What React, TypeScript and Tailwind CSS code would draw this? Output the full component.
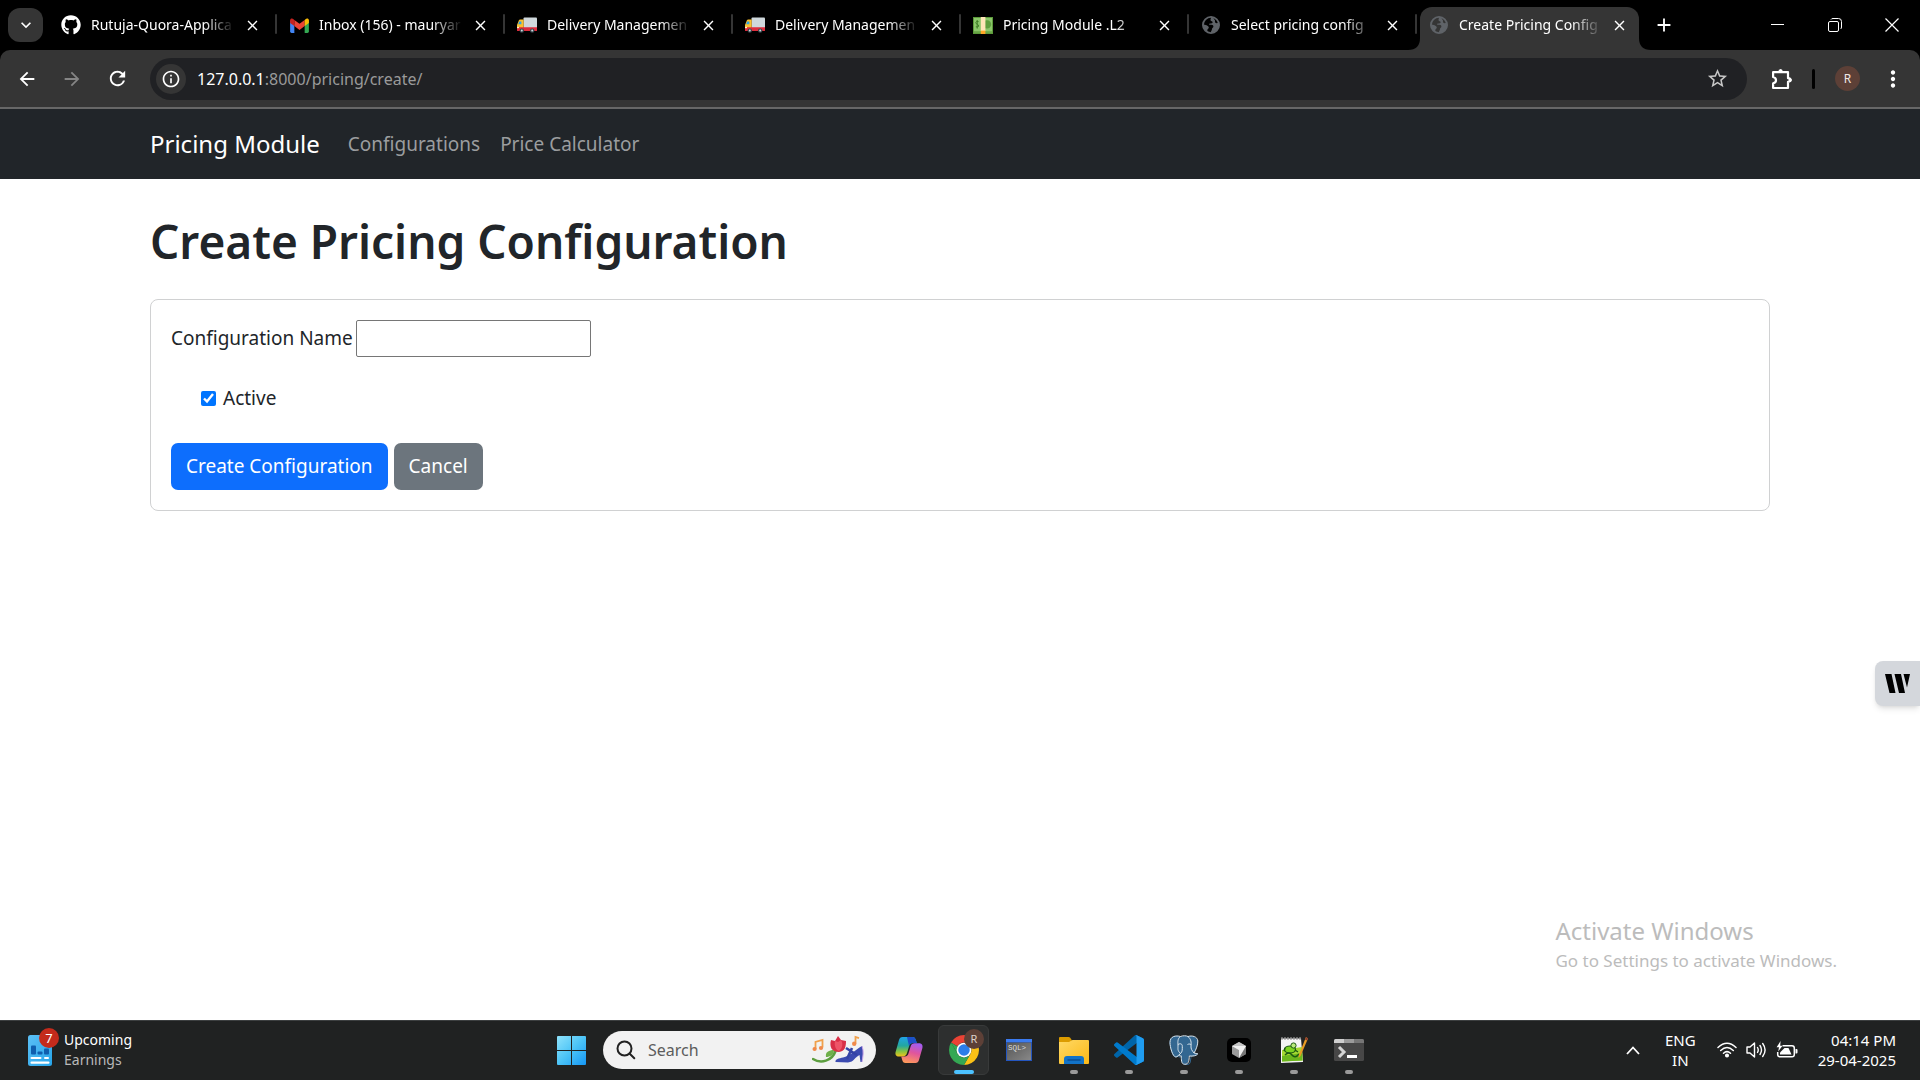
import type { ReactNode } from "react";
import { FaGithub } from "react-icons/fa";
import {
  MdAdd,
  MdArrowBack,
  MdArrowForward,
  MdClose,
  MdInfoOutline,
  MdKeyboardArrowDown,
  MdMoreVert,
  MdRefresh,
  MdStarOutline,
} from "react-icons/md";
import { SiPostgresql } from "react-icons/si";

/* ---------- favicons ---------- */

function GmailIcon() {
  return (
    <svg viewBox="0 0 20 16" className="h-[15px] w-[19px]" aria-hidden="true">
      <path d="M0 2.5V14.5Q0 16 1.5 16H4.5V6Z" fill="#4285f4" />
      <path d="M20 2.5V14.5Q20 16 18.5 16H15.5V6Z" fill="#34a853" />
      <path d="M4.5 2V8.6L10 12.7L15.5 8.6V2L10 6.2Z" fill="#ea4335" />
      <path d="M0 2.4V5.3L4.5 8.6V2L3.6 1.2C2 0 0 .8 0 2.4Z" fill="#c5221f" />
      <path d="M20 2.4V5.3L15.5 8.6V2L16.4 1.2C18 0 20 .8 20 2.4Z" fill="#fbbc04" />
    </svg>
  );
}

function TruckIcon() {
  return (
    <svg viewBox="0 0 20 16" className="h-4 w-5" aria-hidden="true">
      <rect x="6.5" y="0.5" width="13.5" height="11" rx="1" fill="#cfd8dc" />
      <path d="M1.8 3.4Q2.2 2.5 3.2 2.5H6.6V11H0V8Z" fill="#fbc02d" />
      <path d="M2.2 4.4H4.4V7.2H1.2Z" fill="#29a3e8" />
      <path d="M0 10.2H20V13.4Q20 14 19.4 14H.6Q0 14 0 13.4Z" fill="#dd2c3c" />
      <rect x="0" y="9.8" width="2" height="1.4" fill="#fff3c4" />
      <circle cx="4.8" cy="13.6" r="2.2" fill="#37474f" />
      <circle cx="15.2" cy="13.6" r="2.2" fill="#37474f" />
      <circle cx="4.8" cy="13.6" r="1" fill="#cfd8dc" />
      <circle cx="15.2" cy="13.6" r="1" fill="#cfd8dc" />
    </svg>
  );
}

function MoneyIcon() {
  return (
    <svg viewBox="0 0 20 17" className="h-[17px] w-5" aria-hidden="true">
      <rect width="20" height="17" fill="#5c9a3a" />
      <rect x="1" y="1" width="18" height="13" fill="#8bc66a" />
      <rect x="1" y="14.4" width="18" height="1" fill="#7cb85a" />
      <circle cx="14" cy="7.4" r="4.2" fill="#5f9f3e" />
      <path d="M5.600 4.600Q3 3.800 2.800 5.600C2.700 7.400 5.800 7 5.600 9Q5.400 10.600 2.800 9.800M4.200 3V11.600" fill="none" stroke="#3f7d26" strokeWidth="1" />
      <rect x="7.800" width="4.600" height="14" fill="#ffe6b8" />
      <rect x="7.800" y="13.600" width="4.600" height="3.400" fill="#ffa726" />
    </svg>
  );
}

function GlobeIcon() {
  return (
    <svg viewBox="0 0 18 18" className="h-[18px] w-[18px]" aria-hidden="true">
      <circle cx="9" cy="9" r="8.1" fill="none" stroke="#5f6368" strokeWidth="1.8" />
      <path
        d="M8.6 1C9.6 2.4 8 3.2 8.6 4.4C9 5.3 10.6 4.8 10.6 6.2C10.6 7.4 9.4 7.3 8 7.4C6.6 7.6 6.8 8.8 8.2 8.8C10 8.8 11.4 9 11.4 10.6C11.4 11.8 10 11.8 10 13C10 14.6 8.8 15 8.8 17C13.6 17 17 13.4 17 9C17 8 16.8 7 16.4 6.2C15.6 7.4 14 7.6 13.2 6.4C12.6 5.4 13.4 4.6 12.6 3.8C12 3 11.6 2.6 11.6 1.4Z"
        fill="#5f6368"
      />
      <path d="M1 8.6C3 8.6 6.6 9.6 6.8 11.6C6.8 13 5.4 12.6 5.4 14C5.4 15 5 15.6 4.4 15.8C2 14 1 11.6 1 8.6Z" fill="#5f6368" />
    </svg>
  );
}

/* ---------- toolbar icons ---------- */

function PuzzleIcon() {
  return (
    <svg viewBox="0 0 22 22" className="h-[22px] w-[22px]" fill="none" stroke="#fff" strokeWidth="2.2" strokeLinejoin="round" aria-hidden="true">
      <path d="M2.1 4.2H17V10.2Q19.4 10.4 19.4 12Q19.4 13.6 17 13.8V20H2.1V15.4Q5 14.6 5 12.2Q5 9.8 2.1 9Z" />
      <path d="M7.4 3.6Q7.6 1 9.6 1Q11.6 1 11.8 3.6Z" fill="#fff" stroke="none" />
      <path d="M17.6 9.8Q20.8 10 20.8 12Q20.8 14 17.6 14.2Z" fill="#fff" stroke="none" />
    </svg>
  );
}

function TabFlare({ side }: { side: "left" | "right" }) {
  return (
    <svg
      viewBox="0 0 12 12"
      className={side === "left" ? "absolute right-full bottom-0 h-3 w-3" : "absolute bottom-0 left-full h-3 w-3"}
      aria-hidden="true"
    >
      <path d={side === "left" ? "M12 0V12H0Q12 12 12 0Z" : "M0 0V12H12Q0 12 0 0Z"} fill="#353535" />
    </svg>
  );
}

/* ---------- taskbar icons ---------- */

function WidgetsIcon() {
  return (
    <svg viewBox="0 0 24 31" className="h-[31px] w-6" aria-hidden="true">
      <defs>
        <linearGradient id="widget" x1="0" y1="0" x2="1" y2="1">
          <stop offset="0" stopColor="#5cc0f5" />
          <stop offset="1" stopColor="#26a5ea" />
        </linearGradient>
      </defs>
      <rect width="24" height="31" rx="2.5" fill="url(#widget)" />
      <rect x="3" y="10.500" width="5" height="9" rx="1" fill="#0f5fae" />
      <rect x="9.500" y="16.500" width="5" height="3" rx="1" fill="#0f5fae" />
      <rect x="16" y="13.500" width="5" height="6" rx="1" fill="#0f5fae" />
      <rect x="2.500" y="22" width="11" height="2" rx="1" fill="#fff" />
      <rect x="16" y="22" width="5" height="2" rx="1" fill="#fff" />
      <rect x="2.500" y="26.500" width="19" height="2.200" rx="1" fill="#fff" />
    </svg>
  );
}

function StartIcon() {
  return (
    <svg viewBox="0 0 29 29" className="h-[29px] w-[29px]" aria-hidden="true">
      <defs>
        <linearGradient id="start" x1="0" y1="0" x2="29" y2="29" gradientUnits="userSpaceOnUse">
          <stop offset="0" stopColor="#8fe3fb" />
          <stop offset="0.5" stopColor="#4cc4f7" />
          <stop offset="1" stopColor="#1597f5" />
        </linearGradient>
      </defs>
      <path d="M1 0H14V14H0V1Q0 0 1 0ZM15 0H28Q29 0 29 1V14H15ZM0 15H14V29H1Q0 29 0 28ZM15 15H29V28Q29 29 28 29H15Z" fill="url(#start)" />
    </svg>
  );
}

function SearchIcon() {
  return (
    <svg viewBox="0 0 20 20" className="h-5 w-5" fill="none" stroke="#222" strokeWidth="2" strokeLinecap="round" aria-hidden="true">
      <circle cx="8.500" cy="8.500" r="7" />
      <path d="M13.500 13.500L18.300 18.300" />
    </svg>
  );
}

function SearchArt() {
  return (
    <svg viewBox="0 0 54 30" className="h-[30px] w-[54px]" aria-hidden="true">
      <path d="M3.500 14V7L10.500 5V12.500" fill="none" stroke="#f0a04b" strokeWidth="1.800" />
      <circle cx="2.600" cy="14" r="2.100" fill="#f08a4b" />
      <circle cx="9" cy="13" r="2.100" fill="#f08a4b" />
      <path d="M43.500 8.500V2L47 3.200" fill="none" stroke="#f0a04b" strokeWidth="1.800" />
      <circle cx="42.200" cy="8.800" r="2.200" fill="#f08a4b" />
      <path d="M1 24C9 29 20 26 23.500 16" fill="none" stroke="#5c9e3f" strokeWidth="2.600" strokeLinecap="round" />
      <path d="M14 22C13 17 17 15 22 15C22 20 18 22 14 22Z" fill="#6fb04a" />
      <path d="M19 5L23 6L26 1L29 5L34 6C34 12 33 16 27 17C20 17 17 12 19 5Z" fill="#d92f47" />
      <path d="M23 6C22 11 24 15 27 16C31 13 31 8 29 5L26 7Z" fill="#ee5468" />
      <path d="M50 11C52 16 51 22 50 27H48.500L47.500 20C43 22 42 27 36 27.500L23.500 27C23 24 27 23.500 31 22.500C38 21 43 15 50 11Z" fill="#3c4bb0" />
      <path d="M50 11C52 16 51 22 50 27" fill="none" stroke="#c9a6e8" strokeWidth="1" />
      <path d="M34 13L45 20M35 24L40 13" stroke="#3443a5" strokeWidth="2.600" />
    </svg>
  );
}

function CopilotIcon() {
  return (
    <svg viewBox="0 0 28 26" className="h-[26px] w-7" aria-hidden="true">
      <defs>
        <linearGradient id="cpA" x1="0" y1="0" x2="0" y2="1">
          <stop offset="0" stopColor="#20a4e8" />
          <stop offset="0.45" stopColor="#22a7a0" />
          <stop offset="0.75" stopColor="#8ac43f" />
          <stop offset="1" stopColor="#f2c21a" />
        </linearGradient>
        <linearGradient id="cpB" x1="0.6" y1="0" x2="0.3" y2="1">
          <stop offset="0" stopColor="#a45cf0" />
          <stop offset="0.45" stopColor="#e0559c" />
          <stop offset="1" stopColor="#ff9a5a" />
        </linearGradient>
      </defs>
      <path d="M7.500 0H17.500C19.500 0 20.200 1.200 20.800 3L21.800 6H18C15.600 6 14.500 7.500 14 9.500L12 16C11.400 18 10 19.500 8 19.500H4C1 19.500 0 17.500 .6 15L4 3C4.600 1 5.600 0 7.500 0Z" fill="url(#cpA)" />
      <path d="M12 0H17.500C19.500 0 20.200 1.200 20.800 3L21.800 6H18C15.600 6 14.500 7.500 14 9Z" fill="#1c50c8" />
      <path d="M20.500 26H10.500C8.500 26 7.800 24.800 7.200 23L6.200 19.500H9.500C12 19.500 13 18 13.600 16L15.600 9.500C16.200 7.500 17.600 6.300 19.600 6.300H24C27 6.300 28 8.500 27.400 11L24 23C23.400 25 22.400 26 20.500 26Z" fill="url(#cpB)" />
    </svg>
  );
}

function ChromeIcon() {
  return (
    <svg viewBox="0 0 48 48" className="h-[30px] w-[30px]" aria-hidden="true">
      <path d="M3.220 12A24 24 0 0 1 44.780 12H24A12 12 0 0 0 13.610 18Z" fill="#ea4335" />
      <path d="M44.780 12A24 24 0 0 1 24 48L34.390 30A12 12 0 0 0 24 12Z" fill="#fbc116" />
      <path d="M24 48A24 24 0 0 1 3.220 12L13.610 30A12 12 0 0 0 34.390 30Z" fill="#34a853" />
      <path d="M3.220 12L13.610 30L16 20Z" fill="#34a853" />
      <circle cx="24" cy="24" r="11.800" fill="#fff" />
      <circle cx="24" cy="24" r="9.200" fill="#2b7de9" />
    </svg>
  );
}

function SqlIcon() {
  return (
    <svg viewBox="0 0 26 22" className="h-[22px] w-[26px]" aria-hidden="true">
      <defs>
        <linearGradient id="sql" x1="0" y1="0" x2="1" y2="1">
          <stop offset="0" stopColor="#555" />
          <stop offset="1" stopColor="#888" />
        </linearGradient>
      </defs>
      <rect width="26" height="22" fill="#2456c0" />
      <rect width="26" height="3" fill="#3b7bf0" />
      <rect x="1" y="3.500" width="24" height="17.500" fill="url(#sql)" />
      <text x="2" y="10.500" fill="#ddd" fontFamily="Liberation Mono, monospace" fontSize="7.500">
        SQL&gt;
      </text>
    </svg>
  );
}

function FolderIcon() {
  return (
    <svg viewBox="0 0 30 27" className="h-[27px] w-[30px]" aria-hidden="true">
      <defs>
        <linearGradient id="folder" x1="0" y1="0" x2="1" y2="1">
          <stop offset="0" stopColor="#ffd965" />
          <stop offset="1" stopColor="#fbb917" />
        </linearGradient>
      </defs>
      <path d="M0 1Q0 0 1 0H9.500Q10.500 0 11.200 .8L13 3.500V8H0Z" fill="#dc9c00" />
      <path d="M0 5H10L13.500 3H29Q30 3 30 4V26Q30 27 29 27H1Q0 27 0 26Z" fill="url(#folder)" />
      <path d="M5 27V22Q5 19 8 19H22Q25 19 25 22V27Z" fill="#1273c8" />
      <path d="M9 23H21" stroke="#0a4f94" strokeWidth="1.500" strokeLinecap="round" />
    </svg>
  );
}

function VsCodeIcon() {
  return (
    <svg viewBox="0 0 100 100" className="h-[30px] w-[30px]" aria-hidden="true">
      <path d="M96.500 10.700L75.900.8A6.200 6.200 0 0 0 68.800 2L1.400 63.500A4.200 4.200 0 0 0 1.400 69.600L6.900 74.600A4.200 4.200 0 0 0 12.200 74.900L93.500 13.300A4.100 4.100 0 0 1 100 16.600V16.300A6.200 6.200 0 0 0 96.500 10.700Z" fill="#0065a9" />
      <path d="M96.500 89.300L75.900 99.200A6.200 6.200 0 0 1 68.800 98L1.400 36.500A4.200 4.200 0 0 1 1.400 30.400L6.900 25.400A4.200 4.200 0 0 1 12.200 25.100L93.500 86.700A4.100 4.100 0 0 0 100 83.400V83.700A6.200 6.200 0 0 1 96.500 89.300Z" fill="#007acc" />
      <path d="M75.900 99.200A6.200 6.200 0 0 1 68.800 98C71.100 100.300 75 98.700 75 95.400V4.600C75 1.300 71.100-.3 68.800 2A6.200 6.200 0 0 1 75.900.8L96.500 10.700A6.200 6.200 0 0 1 100 16.300V83.700A6.200 6.200 0 0 1 96.500 89.300Z" fill="#1f9cf0" />
    </svg>
  );
}

function PostgresIcon() {
  return (
    <span className="relative flex h-[30px] w-[30px] items-center justify-center">
      <svg viewBox="0 0 24 24" className="absolute inset-0 h-[30px] w-[30px]" aria-hidden="true">
        <path
          d="M6 .8C2.500.8.8 3.200 1 7C1.300 12 3.500 17.500 5.500 17.800C7 17.800 8 16.500 9 15.500L9.800 17C9.800 19 9.500 23.200 12.500 23.200C15.300 23.200 15.800 21 15.800 16.800C19 16.900 21.500 16.500 22.800 15C22 14.600 21 14.800 20.200 14.600C21.800 11.500 23.800 5.500 22 3C20 .6 17 .6 15 1.300C13 .8 11 .9 9.500 1.500C8.500 1.100 7 .8 6 .8Z"
          fill="#336791"
        />
      </svg>
      <SiPostgresql className="relative h-[29px] w-[29px] text-[#336791]" aria-hidden="true" />
      <svg viewBox="0 0 30 30" className="absolute inset-0 h-[30px] w-[30px]" fill="none" stroke="#dbe6ee" strokeWidth="1" strokeLinejoin="round" aria-hidden="true">
        <path d="M11.500 1.500C7 .2 1 1 1 7.500C1 12 3.500 21.500 6.800 22C8.500 22.200 9.500 19.800 11.500 18.500M11.500 1.500C14 .5 17 .5 19 1.500C23 .2 28.500 1.500 28.800 6C29 9.500 27 15 25 18C26.500 18.700 28 18.200 28.800 18.800C27.500 20.800 24 21.300 20.300 21C20 25 20 29.300 15.800 29.300C11.800 29.300 12.500 24 12.200 20.800C9.800 21.300 9.300 20 11.500 18.500" />
        <path d="M11.500 1.500C8.500 3.500 8.800 7 9 10C9.200 13.500 8 15.500 11.500 18.500M19 1.500C22 4 22.500 7.500 22 11C21.800 14 23 15.500 25 18M9 9.500C11.500 8 13.500 9 13.300 11.500C13.200 14 13.800 16.500 11.500 18.500M22.200 9.500C20.500 8.700 19.500 9 18.500 9.500" />
      </svg>
    </span>
  );
}

function CursorIcon() {
  return (
    <svg viewBox="0 0 24 24" className="h-6 w-6" aria-hidden="true">
      <rect width="24" height="24" rx="5" fill="#000" />
      <path d="M12 4L19 8V16L12 20L5 16V8Z" fill="#9a9a9a" />
      <path d="M12 4L19 8L12 12L5 8Z" fill="#c4c4c4" />
      <path d="M19 8V16L12 20V12Z" fill="#777" />
      <path d="M5 8H19L12 20V12Z" fill="#efefef" />
    </svg>
  );
}

function NotepadIcon() {
  return (
    <svg viewBox="0 0 28 28" className="h-7 w-7" aria-hidden="true">
      <path d="M1 2.500H21L23 26L1 27Z" fill="#f4f4f4" />
      <path d="M2 14L22 11L22.500 24.500L2 25.500Z" fill="#a6d932" />
      <path d="M2 20L22.200 17L22.500 24.500L2 25.500Z" fill="#6bb71d" />
      <path d="M2 1V4M5 1V4M8 1V4M11 1V4M14 1V4M17 1V4M20 1V4" stroke="#999" strokeWidth="1.200" />
      <ellipse cx="10" cy="13.500" rx="5.500" ry="3.500" fill="#7ed321" stroke="#1c5a12" strokeWidth="1.200" />
      <circle cx="13.500" cy="9.500" r="2.600" fill="#b9ea7a" stroke="#1c5a12" strokeWidth="1" />
      <path d="M5 19Q9 15 12 19T19 18M5 12L4 15M15 14L18 16" fill="none" stroke="#1c5a12" strokeWidth="1.400" />
      <path d="M26 1L28 2.500L20.500 20L18.500 22L18.800 19Z" fill="#e89b24" />
      <path d="M26 1L28 2.500L27 4.500L25 3.500Z" fill="#8c3b2e" />
    </svg>
  );
}

function TerminalIcon() {
  return (
    <svg viewBox="0 0 30 22" className="h-[22px] w-[30px]" aria-hidden="true">
      <rect width="30" height="22" rx="1.500" fill="#474747" />
      <path d="M0 4V1.500Q0 0 1.500 0H10V4Z" fill="#cfcfcf" />
      <rect x="10" width="10" height="4" fill="#9b9b9b" />
      <path d="M20 0H28.500Q30 0 30 1.500V4H20Z" fill="#767676" />
      <path d="M5 8L10 13L5 18" fill="none" stroke="#d4d4d4" strokeWidth="3" />
      <rect x="13" y="16" width="10" height="3" fill="#fff" />
    </svg>
  );
}

function WifiIcon() {
  return (
    <svg viewBox="0 0 20 16" className="h-4 w-5" fill="none" stroke="#fff" strokeWidth="1.500" strokeLinecap="round" aria-hidden="true">
      <path d="M1 5.500Q10-3 19 5.500M3.700 8.500Q10 2.600 16.300 8.500M6.500 11.300Q10 8 13.500 11.300" />
      <circle cx="10" cy="13.500" r="1.300" fill="#fff" />
    </svg>
  );
}

function VolumeIcon() {
  return (
    <svg viewBox="0 0 21 18" className="h-[18px] w-[21px]" fill="none" stroke="#fff" strokeWidth="1.400" strokeLinecap="round" strokeLinejoin="round" aria-hidden="true">
      <path d="M1 6H4L8.500 2V16L4 12H1Z" />
      <path d="M11.500 6.500Q13 9 11.500 11.500M14 4.500Q17 9 14 13.500M16.700 2.500Q21.500 9 16.700 15.500" />
    </svg>
  );
}

function BatteryIcon() {
  return (
    <svg viewBox="0 0 22 18" className="h-[18px] w-[22px]" aria-hidden="true">
      <path d="M6.500 4.700H16Q18.300 4.700 18.300 7V13.500Q18.300 15.800 16 15.800H4Q1.700 15.800 1.700 13.500V11" fill="none" stroke="#fff" strokeWidth="1.500" />
      <path d="M19.500 8H20.500Q21.500 8 21.500 9V11.500Q21.500 12.500 20.500 12.500H19.500Z" fill="#fff" />
      <path d="M8.500 7H12.500L15.500 13.500H4V11.500Z" fill="#fff" />
      <path d="M4.600 0L.6 6.200H3L2.200 10.600L6.500 4.700H4.200Z" fill="#fff" />
    </svg>
  );
}

/* ---------- browser ---------- */

const tabs: { title: string; icon: ReactNode; active?: boolean }[] = [
  { title: "Rutuja-Quora-Applica", icon: <FaGithub className="h-5 w-5" /> },
  { title: "Inbox (156) - mauryar", icon: <GmailIcon /> },
  { title: "Delivery Managemen", icon: <TruckIcon /> },
  { title: "Delivery Managemen", icon: <TruckIcon /> },
  { title: "Pricing Module .L2", icon: <MoneyIcon /> },
  { title: "Select pricing config", icon: <GlobeIcon /> },
  { title: "Create Pricing Config", icon: <GlobeIcon />, active: true },
];

function Tab({ title, icon, active }: { title: string; icon: ReactNode; active?: boolean }) {
  return (
    <div
      className={
        active
          ? "relative mt-[7px] ml-[3px] flex h-[43px] max-w-[219px] min-w-0 flex-1 items-center rounded-t-xl bg-[#353535] pb-[7px] pl-[9px]"
          : "relative flex h-[50px] max-w-[228px] min-w-0 flex-1 items-center pl-[12px]"
      }
    >
      {active && <TabFlare side="left" />}
      <button type="button" className="flex min-w-0 flex-1 items-center text-left">
        <span className="flex w-[20px] shrink-0 items-center justify-center">{icon}</span>
        <span className="ml-[10px] max-w-[148px] flex-1 overflow-hidden [mask-image:linear-gradient(to_right,#000_76%,transparent_97%)] text-[14px] leading-5 whitespace-nowrap">
          {title}
        </span>
      </button>
      <button type="button" aria-label={`Close ${title}`} className={active ? "mr-[11px] shrink-0" : "mr-[16px] shrink-0"}>
        <MdClose className="h-[17px] w-[17px]" />
      </button>
      {!active && <span className="absolute top-[14px] right-0 h-5 w-[2px] rounded bg-[#353535]" />}
      {active && <TabFlare side="right" />}
    </div>
  );
}

function BrowserChrome() {
  return (
    <header className="bg-black text-white">
      <div className="flex h-[50px] items-start">
        <button
          type="button"
          aria-label="Search tabs"
          className="mt-2 mr-[6px] ml-2 flex h-[34px] w-[35px] shrink-0 items-center justify-center rounded-xl bg-[#353535]"
        >
          <MdKeyboardArrowDown className="h-5 w-5" />
        </button>
        <div className="flex min-w-0 flex-1">
          {tabs.map((tab, i) => (
            <Tab key={i} {...tab} />
          ))}
          <button type="button" aria-label="New tab" className="ml-[14px] flex h-[50px] shrink-0 items-center">
            <MdAdd className="h-[22px] w-[22px]" />
          </button>
        </div>
        <div className="flex h-[50px] shrink-0 items-center">
          <button type="button" aria-label="Minimize" className="flex w-[57px] justify-center">
            <svg viewBox="0 0 14 14" className="h-[14px] w-[14px]" stroke="#fff" aria-hidden="true">
              <path d="M0 6.500H13" />
            </svg>
          </button>
          <button type="button" aria-label="Restore" className="flex w-[57px] justify-center">
            <svg viewBox="0 0 14 14" className="h-[14px] w-[14px]" fill="none" stroke="#fff" aria-hidden="true">
              <rect x="0.500" y="3.500" width="10" height="10" rx="1.500" />
              <path d="M3 1.500Q3.500.5 5 .5H10.500Q13.500.5 13.500 3.500V9Q13.500 10.500 12.500 11" />
            </svg>
          </button>
          <button type="button" aria-label="Close window" className="flex w-[57px] justify-center">
            <svg viewBox="0 0 14 14" className="h-[14px] w-[14px]" stroke="#fff" strokeWidth="1.200" aria-hidden="true">
              <path d="M.5.5L13.500 13.500M13.500.5L.5 13.500" />
            </svg>
          </button>
        </div>
      </div>
      <div className="flex h-[59px] items-center rounded-t-[10px] border-b-2 border-[#676767] bg-[#353535]">
        <div className="flex w-[150px] shrink-0 items-center gap-[23px] pl-4">
          <button type="button" aria-label="Back">
            <MdArrowBack className="h-[22px] w-[22px]" />
          </button>
          <button type="button" aria-label="Forward" className="text-[#858585]">
            <MdArrowForward className="h-[22px] w-[22px]" />
          </button>
          <button type="button" aria-label="Reload">
            <MdRefresh className="h-[23px] w-[23px]" />
          </button>
        </div>
        <div className="flex h-[42px] min-w-0 flex-1 items-center rounded-full bg-[#202124] pr-[18px] pl-[6px]">
          <button type="button" aria-label="Site information" className="flex h-[30px] w-[30px] items-center justify-center rounded-full bg-[#353535]">
            <MdInfoOutline className="h-5 w-5" />
          </button>
          <a href="#" className="ml-[11px] flex-1 text-[16px] leading-6 text-[#9a9a9a]">
            <span className="text-white">127.0.0.1</span>:8000/pricing/create/
          </a>
          <button type="button" aria-label="Bookmark this page" className="text-[#c7c7c7]">
            <MdStarOutline className="h-[23px] w-[23px]" />
          </button>
        </div>
        <div className="flex w-[173px] shrink-0 items-center pl-6">
          <button type="button" aria-label="Extensions">
            <PuzzleIcon />
          </button>
          <span className="ml-[19px] h-5 w-[3px] rounded bg-black" />
          <button
            type="button"
            aria-label="Profile"
            className="ml-5 flex h-[25px] w-[25px] items-center justify-center rounded-full bg-[#5d4037] text-[12px] text-[#f0e6e2]"
          >
            R
          </button>
          <button type="button" aria-label="Menu" className="ml-5">
            <MdMoreVert className="h-[26px] w-[26px]" />
          </button>
        </div>
      </div>
    </header>
  );
}

/* ---------- page ---------- */

function Page() {
  return (
    <div className="relative flex-1 bg-white text-[#212529]">
      <nav className="bg-[#212529] px-6">
        <div className="mx-auto flex h-[70px] max-w-[1620px] items-center text-[19px] text-[#9b9d9f]">
          <a href="#" className="mr-7 text-[24px] text-white">
            Pricing Module
          </a>
          <a href="#" className="mr-5">
            Configurations
          </a>
          <a href="#">Price Calculator</a>
        </div>
      </nav>
      <main className="px-6 pt-8">
        <div className="mx-auto max-w-[1620px]">
          <h1 className="mb-7 text-[46px] leading-[60px] font-semibold">Create Pricing Configuration</h1>
          <form className="rounded-lg border border-[#d0d1d2] p-5 text-[19px]" onSubmit={(e) => e.preventDefault()}>
            <div className="flex items-center gap-[3px]">
              <label htmlFor="config-name">Configuration Name</label>
              <input id="config-name" type="text" className="h-[37px] w-[235px] rounded-[2px] border border-[#767676] bg-white px-1" />
            </div>
            <div className="mt-6 ml-[30px] flex h-[34px] items-center gap-[7px]">
              <input id="active" type="checkbox" defaultChecked className="h-[15px] w-[15px] accent-[#0075ff]" />
              <label htmlFor="active">Active</label>
            </div>
            <div className="mt-7 flex gap-[6px] text-white">
              <button type="submit" className="h-[47px] rounded-[7px] bg-[#0d6efd] px-[15px]">
                Create Configuration
              </button>
              <a href="#" className="flex h-[47px] items-center rounded-[7px] bg-[#6c757d] px-[15px]">
                Cancel
              </a>
            </div>
          </form>
        </div>
      </main>
      <button
        type="button"
        aria-label="Open side panel"
        className="absolute top-[552px] right-0 flex h-[45px] w-[45px] items-center rounded-l-lg bg-[#d4d7dc] pl-[10px] shadow-md"
      >
        <svg viewBox="0 0 25 19" className="h-[19px] w-[25px]" aria-hidden="true">
          <path d="M0 0H6.500L10.500 19H4.500ZM9.500 0H16L20 19H14ZM18.500 0H25L22 13.500Z" fill="#000" />
        </svg>
      </button>
      <div className="absolute right-[83px] bottom-[46px] text-[#bcbcbc]">
        <p className="text-[24px] leading-[34px]">Activate Windows</p>
        <p className="text-[17px] leading-[26px]">Go to Settings to activate Windows.</p>
      </div>
    </div>
  );
}

/* ---------- taskbar ---------- */

const apps: { name: string; icon: ReactNode; state: "idle" | "open" | "focused" }[] = [
  { name: "Copilot", icon: <CopilotIcon />, state: "idle" },
  { name: "Google Chrome", icon: <ChromeIcon />, state: "focused" },
  { name: "SQL Command Line", icon: <SqlIcon />, state: "idle" },
  { name: "File Explorer", icon: <FolderIcon />, state: "open" },
  { name: "Visual Studio Code", icon: <VsCodeIcon />, state: "open" },
  { name: "PostgreSQL", icon: <PostgresIcon />, state: "open" },
  { name: "Cursor", icon: <CursorIcon />, state: "open" },
  { name: "Notepad++", icon: <NotepadIcon />, state: "open" },
  { name: "Terminal", icon: <TerminalIcon />, state: "open" },
];

function Taskbar() {
  return (
    <footer className="grid h-[60px] grid-cols-[1fr_auto_1fr] items-center bg-[#202222] text-white inset-shadow-[0_1px_0_#3c3f40]">
      <button type="button" className="flex items-center justify-self-start pl-[28px] text-left leading-5">
        <span className="relative">
          <WidgetsIcon />
          <span className="absolute -top-[7px] left-[11px] flex h-5 w-5 items-center justify-center rounded-full bg-[#c42b1c] text-[13px]">
            7
          </span>
        </span>
        <span className="ml-3 block text-[14px]">
          Upcoming
          <span className="block text-[#b9b9b9]">Earnings</span>
        </span>
      </button>
      <div className="flex items-center">
        <button type="button" aria-label="Start" className="flex w-[55px] justify-center">
          <StartIcon />
        </button>
        <div className="mr-[5px] ml-1 flex h-[38px] w-[273px] items-center rounded-full bg-[#f2f2f2] pr-[10px] pl-[13px]">
          <SearchIcon />
          <input
            type="text"
            aria-label="Search"
            placeholder="Search"
            className="ml-3 min-w-0 flex-1 bg-transparent text-[16px] text-[#222] outline-none placeholder:text-[#5c5c5c]"
          />
          <SearchArt />
        </div>
        {apps.map((app) => (
          <button key={app.name} type="button" aria-label={app.name} className="relative flex h-[50px] w-[55px] items-center justify-center">
            {app.state === "focused" && <span className="absolute inset-x-[2px] inset-y-0 rounded-md border border-[#383a3a] bg-[#2d2f2f]" />}
            <span className="relative">{app.icon}</span>
            {app.state === "focused" && (
              <>
                <span className="absolute top-1 left-[28px] flex h-5 w-5 items-center justify-center rounded-full bg-[#5d4037] text-[11px] text-[#dcd0cb]">
                  R
                </span>
                <span className="absolute bottom-[1px] h-1 w-5 rounded-full bg-[#4cc2ff]" />
              </>
            )}
            {app.state === "open" && <span className="absolute bottom-[1px] h-1 w-2 rounded-full bg-[#9a9a9a]" />}
          </button>
        ))}
      </div>
      <div className="flex items-center justify-self-end pr-6 text-[15px] leading-5">
        <button type="button" aria-label="Show hidden icons" className="mr-[25px]">
          <svg viewBox="0 0 14 9" className="h-[9px] w-[14px]" fill="none" stroke="#fff" strokeWidth="1.800" aria-hidden="true">
            <path d="M1 8L7 1.500L13 8" />
          </svg>
        </button>
        <button type="button" className="mr-[21px] text-center">
          ENG
          <br />
          IN
        </button>
        <button type="button" aria-label="Network, volume and battery" className="mr-5 flex items-center gap-[9px]">
          <WifiIcon />
          <VolumeIcon />
          <BatteryIcon />
        </button>
        <button type="button" className="text-right">
          04:14 PM
          <br />
          29-04-2025
        </button>
      </div>
    </footer>
  );
}

export default function App() {
  return (
    <div className="flex min-h-screen flex-col font-['Noto_Sans',sans-serif]">
      <BrowserChrome />
      <Page />
      <Taskbar />
    </div>
  );
}
